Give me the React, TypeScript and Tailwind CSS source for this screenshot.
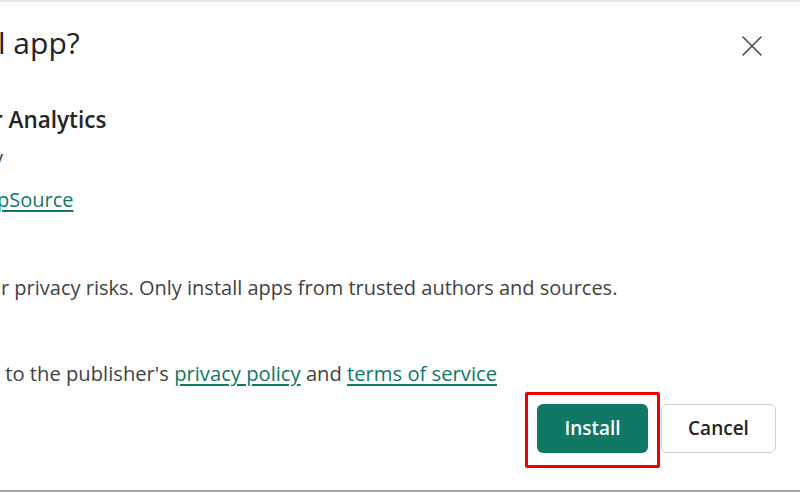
export default function App() {
  return (
    <div className="w-[800px] h-[492px] bg-white overflow-hidden border-t-2 border-t-[#e6e6e6] border-b-2 border-b-[#a3a3a3] flex flex-col font-['Open_Sans',sans-serif] text-[#424242]">
      {/* Header */}
      <div className="flex items-start justify-between pt-[21px] pr-[38px]">
        <h1 className="-ml-[2px] text-[30px] leading-[40px] text-[#242424] whitespace-nowrap">l app?</h1>
        <button className="mt-[13px] w-[20px] h-[20px] text-[#424242]">
          <svg viewBox="0 0 20 20" className="w-[20px] h-[20px]" fill="none" stroke="currentColor" strokeWidth={1.5} strokeLinecap="round">
            <path d="M1 1 L19 19 M19 1 L1 19" />
          </svg>
        </button>
      </div>

      {/* App info */}
      <p className="mt-[43px] -ml-[7px] text-[22.5px] leading-[28px] font-semibold text-[#242424] whitespace-nowrap">
        r Analytics
      </p>
      <p className="mt-[10px] -ml-[7px] text-[20px] leading-[28px] whitespace-nowrap">y</p>
      <p className="mt-[14px] -ml-[3px] text-[20px] leading-[28px] whitespace-nowrap">
        <a href="#" className="text-[#117865] underline underline-offset-[3px]">pSource</a>
      </p>

      {/* Warning */}
      <p className="mt-[60px] ml-[1px] text-[20px] leading-[28px] whitespace-nowrap">
        r privacy risks. Only install apps from trusted authors and sources.
      </p>

      {/* Consent */}
      <p className="mt-[57px] text-[20.2px] leading-[28px] whitespace-pre">
        {' to the publisher\'s '}
        <a href="#" className="text-[#117865] underline underline-offset-[3px]">privacy policy</a>
        {' and '}
        <a href="#" className="text-[#117865] underline underline-offset-[3px]">terms of service</a>
      </p>

      {/* Actions */}
      <div className="mt-[17px] flex justify-end gap-[13px] pr-[24px]">
        <div className="relative">
          <button className="w-[111px] h-[49px] rounded-[6px] bg-[#117865] text-white text-[19px] font-semibold">
            Install
          </button>
          <div className="absolute -left-[12px] -right-[12px] -top-[12px] -bottom-[15px] border-[3px] border-[#ee0000] rounded-[2px] pointer-events-none" />
        </div>
        <button className="w-[115px] h-[49px] rounded-[6px] bg-white border border-[#d1d1d1] text-[#242424] text-[19px] font-semibold">
          Cancel
        </button>
      </div>
    </div>
  );
}
